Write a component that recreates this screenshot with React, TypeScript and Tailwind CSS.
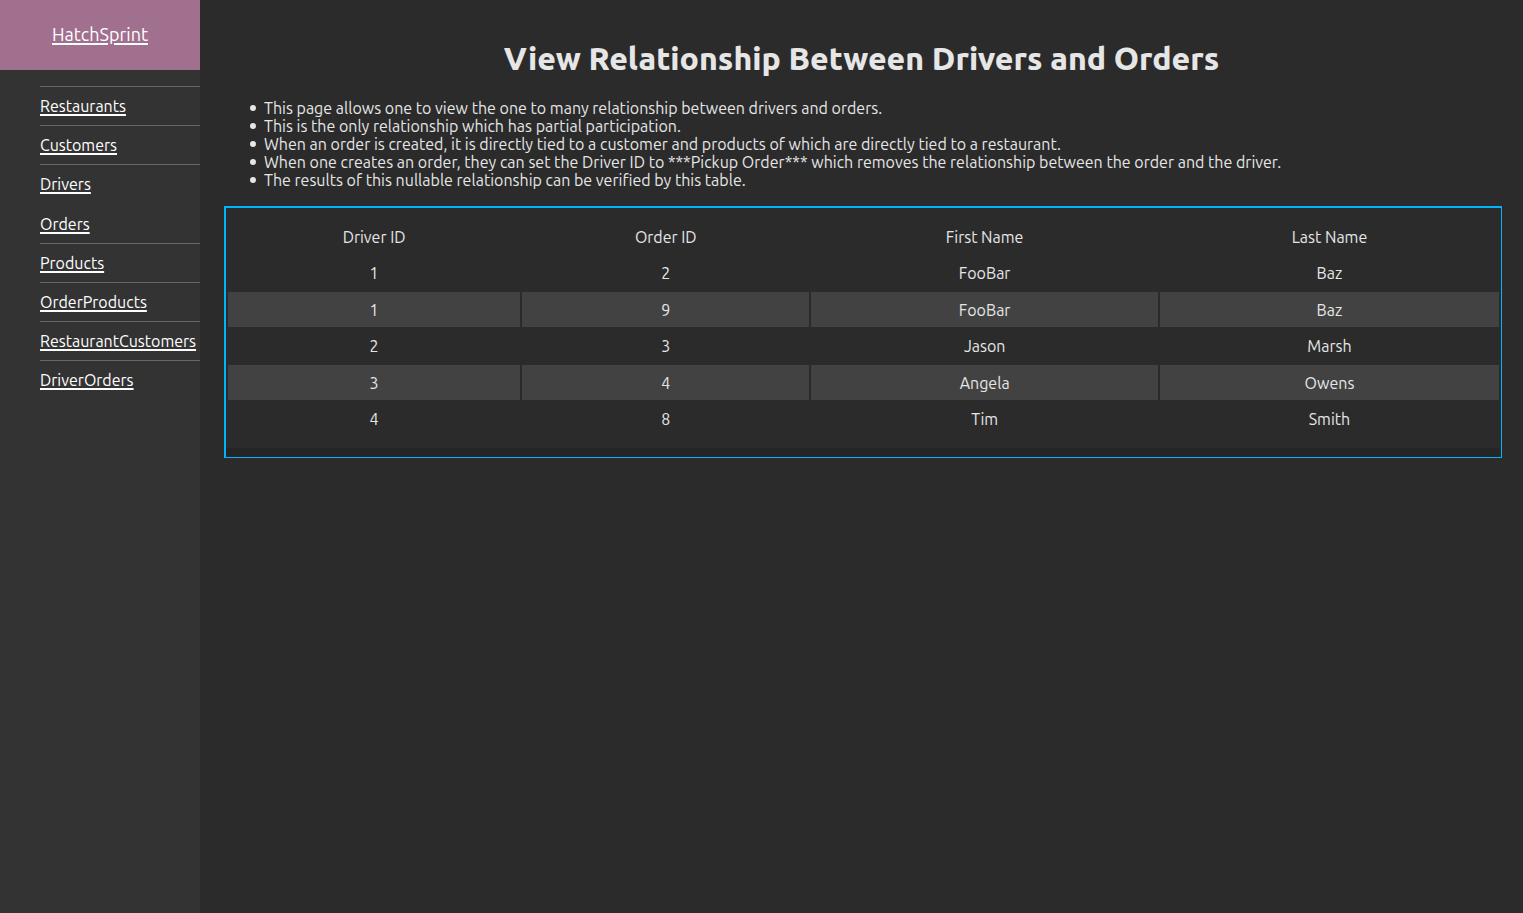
const navGroups = [
  ["Restaurants", "Customers", "Drivers"],
  ["Orders", "Products", "OrderProducts", "RestaurantCustomers", "DriverOrders"],
];

const notes = [
  "This page allows one to view the one to many relationship between drivers and orders.",
  "This is the only relationship which has partial participation.",
  "When an order is created, it is directly tied to a customer and products of which are directly tied to a restaurant.",
  "When one creates an order, they can set the Driver ID to ***Pickup Order*** which removes the relationship between the order and the driver.",
  "The results of this nullable relationship can be verified by this table.",
];

const rows = [
  [1, 2, "FooBar", "Baz"],
  [1, 9, "FooBar", "Baz"],
  [2, 3, "Jason", "Marsh"],
  [3, 4, "Angela", "Owens"],
  [4, 8, "Tim", "Smith"],
];

function Sidebar() {
  return (
    <aside className="w-[200px] shrink-0 bg-[#333333] text-white">
      <div className="flex h-[70px] items-center justify-center bg-[#a2708f] pb-0.5">
        <a href="#home" className="text-[18px] underline decoration-2 underline-offset-2">
          HatchSprint
        </a>
      </div>
      <nav className="mt-4 flex flex-col gap-px pl-10" aria-label="Main">
        {navGroups.map((group, g) => (
          <ul key={g}>
            {group.map((label, i) => (
              <li
                key={label}
                className={`flex h-[39px] items-center border-t ${
                  g > 0 && i === 0 ? "border-transparent" : "border-[#666666]"
                }`}
              >
                <a href={`#${label}`} className="underline decoration-2 underline-offset-2">
                  {label}
                </a>
              </li>
            ))}
          </ul>
        ))}
      </nav>
    </aside>
  );
}

function DriverOrdersTable() {
  return (
    <div className="mt-[17px] mr-[21px] ml-6 border-t-2 border-r border-b border-l-2 border-[#00b4ff]">
      <div className="py-[10px]">
        <table className="w-full table-fixed border-separate border-spacing-[2px] text-center">
          <colgroup>
            <col className="w-[23.1%]" />
            <col className="w-[22.7%]" />
            <col className="w-[27.4%]" />
            <col className="w-[26.8%]" />
          </colgroup>
          <thead>
            <tr className="h-[34px]">
              {["Driver ID", "Order ID", "First Name", "Last Name"].map((h) => (
                <th key={h} scope="col" className="p-0 font-normal">
                  {h}
                </th>
              ))}
            </tr>
          </thead>
          <tbody>
            {rows.map((row, r) => (
              <tr key={r} className="h-[34px] even:h-[35px] even:*:bg-[#424242]">
                {row.map((cell, c) => (
                  <td key={c} className="p-0">
                    {cell}
                  </td>
                ))}
              </tr>
            ))}
          </tbody>
        </table>
      </div>
      <div className="h-[9px] bg-[#252525]" />
    </div>
  );
}

export default function App() {
  return (
    <div className="flex min-h-screen bg-[#2b2b2b] font-['Ubuntu','Noto_Sans',sans-serif] text-base leading-[18px] text-[#e6e6e6]">
      <Sidebar />
      <main className="min-w-0 flex-1">
        <h1 className="mt-10 text-center text-[32px] leading-9 font-extrabold">
          View Relationship Between Drivers and Orders
        </h1>
        <ul className="mt-[23px] mr-[21px] ml-6 pl-[26px]">
          {notes.map((note) => (
            <li
              key={note}
              className="flex gap-2 before:mt-1.5 before:size-1.5 before:shrink-0 before:rounded-full before:bg-[#e6e6e6] before:content-['']"
            >
              {note}
            </li>
          ))}
        </ul>
        <DriverOrdersTable />
      </main>
    </div>
  );
}
